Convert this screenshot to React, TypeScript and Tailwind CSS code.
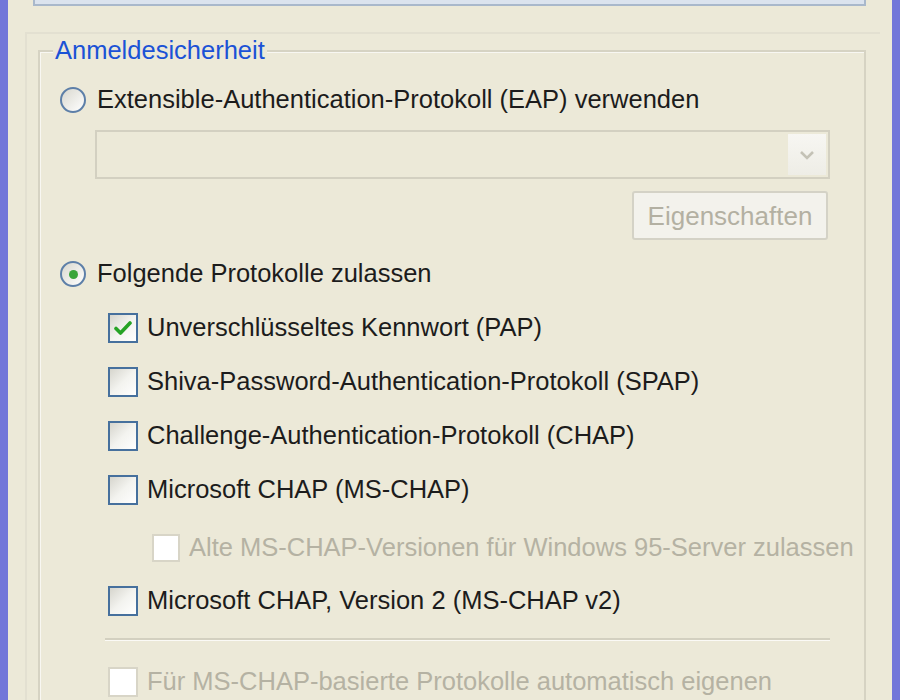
import React from "react";

const font = { fontFamily: '"Liberation Sans", Arial, sans-serif' };

function Radio({ checked }: { checked?: boolean }) {
  return (
    <span className="relative flex h-[26px] w-[26px] shrink-0 items-center justify-center rounded-full border-[2px] border-[#5d7fa8] bg-gradient-to-br from-[#d9d8cf] to-[#ffffff]">
      {checked && <span className="h-[9px] w-[9px] rounded-full bg-[#3aa53a]" />}
    </span>
  );
}

function Check({ checked, disabled, size = 30 }: { checked?: boolean; disabled?: boolean; size?: number }) {
  const box = disabled
    ? "border-[#d8d5c7] bg-white"
    : "border-[#46709d] bg-gradient-to-br from-[#d6d5cd] via-[#f3f3ef] to-[#ffffff]";
  return (
    <span
      className={`flex shrink-0 items-center justify-center border-[2px] ${box} ${size === 30 ? "h-[30px] w-[30px]" : "h-[28px] w-[28px]"}`}
    >
      {checked && (
        <svg width="18" height="16" viewBox="0 0 18 16">
          <path d="M2 8.5 L6.5 13 L16 3" fill="none" stroke="#26a326" strokeWidth="3.6" strokeLinecap="round" strokeLinejoin="round" />
        </svg>
      )}
    </span>
  );
}

function CheckRow({
  label,
  checked,
  disabled,
  h,
  indent = 48,
}: {
  label: string;
  checked?: boolean;
  disabled?: boolean;
  h: string;
  indent?: number;
}) {
  return (
    <div className={`flex items-center ${h} ${indent === 48 ? "pl-[48px]" : "pl-[92px]"}`}>
      <Check checked={checked} disabled={disabled} size={indent === 48 ? 30 : 28} />
      <span className={`ml-[9px] text-[25.5px] leading-none ${disabled ? "text-[#b5b2a3]" : "text-[#1c1c1c]"}`}>{label}</span>
    </div>
  );
}

export default function App() {
  return (
    <div
      className="relative h-[700px] w-[900px] overflow-hidden border-x-[8px] border-[#7276d9] bg-[#ece9d8]"
      style={font}
    >
      {/* edit field above, only its lower edge shows */}
      <div className="ml-[25px] mr-[26px] h-[6px] border-x-[2px] border-b-[2px] border-[#a9b8cb] bg-[#dbe3ee]" />

      {/* page frame */}
      <div className="ml-[17px] mr-[12px] mt-[26px] h-[700px] border-l-[2px] border-t-[2px] border-[#e3e0d1] pl-[11px] pt-[16px] pr-[14px]">
        {/* group box */}
        <div className="relative h-[700px] border-[2px] border-[#d6d3c3] shadow-[inset_1px_1px_0_#f8f7f2] pl-[20px]">
          <span className="absolute left-[13px] top-[-15px] bg-[#ece9d8] px-[2px] text-[25.5px] leading-[26px] text-[#1b52d6]">
            Anmeldesicherheit
          </span>

          {/* EAP option */}
          <div className="mt-[28px] flex h-[40px] items-center">
            <Radio />
            <span className="ml-[11px] text-[25.5px] leading-none text-[#1c1c1c]">
              Extensible-Authentication-Protokoll (EAP) verwenden
            </span>
          </div>

          {/* disabled EAP type list */}
          <div className="ml-[35px] mt-[10px] flex h-[49px] w-[735px] items-stretch border-[2px] border-[#d3d0c1]">
            <div className="flex-1" />
            <div className="m-[2px] flex w-[38px] items-center justify-center bg-gradient-to-b from-[#f7f6f2] to-[#eeede6]">
              <svg width="16" height="10" viewBox="0 0 16 10">
                <path d="M2 2 L8 8 L14 2" fill="none" stroke="#c4c2b6" strokeWidth="2.6" />
              </svg>
            </div>
          </div>

          <div className="ml-[572px] mt-[12px] flex h-[49px] w-[196px] items-center justify-center rounded-[3px] border-[2px] border-[#d4d2c6] bg-[#f3f2ec]">
            <span className="text-[26px] leading-none text-[#b3b0a2]">Eigenschaften</span>
          </div>

          {/* allowed protocols */}
          <div className="mt-[14px] flex h-[40px] items-center">
            <Radio checked />
            <span className="ml-[11px] text-[25.5px] leading-none text-[#1c1c1c]">Folgende Protokolle zulassen</span>
          </div>

          <div className="mt-[7px]">
            <CheckRow h="h-[54px]" checked label="Unverschlüsseltes Kennwort (PAP)" />
            <CheckRow h="h-[54px]" label="Shiva-Password-Authentication-Protokoll (SPAP)" />
            <CheckRow h="h-[54px]" label="Challenge-Authentication-Protokoll (CHAP)" />
            <CheckRow h="h-[54px]" label="Microsoft CHAP (MS-CHAP)" />
            <CheckRow h="h-[62px]" indent={92} disabled label="Alte MS-CHAP-Versionen für Windows 95-Server zulassen" />
            <CheckRow h="h-[44px]" label="Microsoft CHAP, Version 2 (MS-CHAP v2)" />
          </div>

          <div className="ml-[45px] mt-[15px] h-[3px] w-[725px] border-t-[2px] border-[#d3d0c0] bg-[#fbfaf6]" />

          <div className="mt-[18px]">
            <CheckRow h="h-[46px]" disabled label="Für MS-CHAP-basierte Protokolle automatisch eigenen" />
          </div>
        </div>
      </div>
    </div>
  );
}
